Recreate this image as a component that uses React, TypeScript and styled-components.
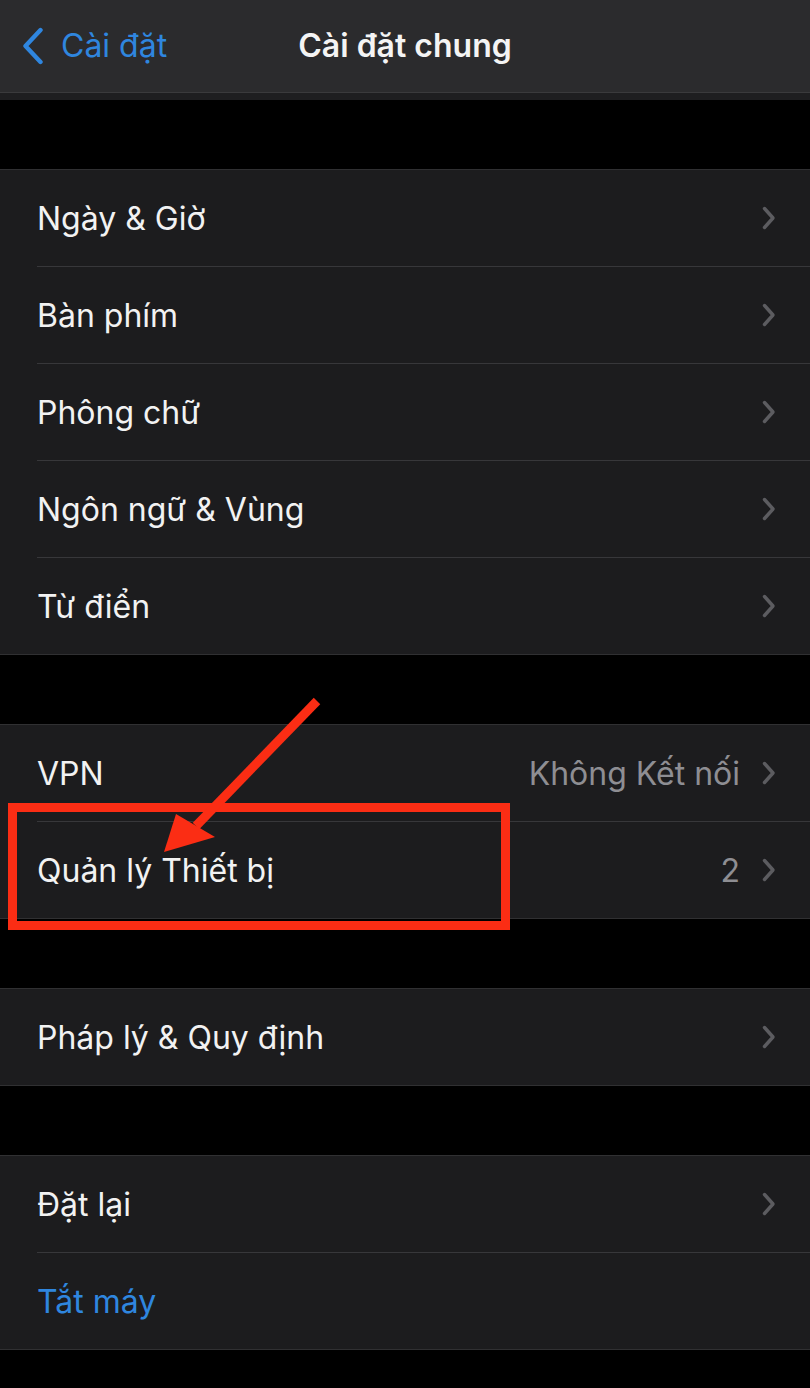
import React from "react";
import styled, { createGlobalStyle } from "styled-components";

const GlobalStyle = createGlobalStyle`
  html, body {
    margin: 0;
    padding: 0;
    background: #000;
  }
  body {
    font-family: Inter, "Noto Sans", "Liberation Sans", sans-serif;
    -webkit-font-smoothing: antialiased;
  }
`;

const Screen = styled.div`
  position: relative;
  width: 810px;
  height: 1388px;
  overflow: hidden;
  background: #000;
`;

const NavBar = styled.header`
  display: grid;
  grid-template-columns: 1fr auto 1fr;
  align-items: center;
  height: 92px;
  background: #2b2b2d;
  border-bottom: 1px solid #3a3a3c;
`;

const NavStrip = styled.div`
  height: 7px;
  background: #1e1e20;
`;

const BackButton = styled.div`
  display: flex;
  align-items: center;
  gap: 17px;
  padding-left: 22px;
  color: #2f86df;
  font-size: 32px;
  padding-bottom: 1px;
`;

const Title = styled.h1`
  margin: 0;
  color: #f4f4f4;
  font-size: 32px;
  font-weight: 600;
  padding-bottom: 1px;
`;

const Group = styled.section`
  margin-top: 69px;
  background: #1c1c1e;
  border-top: 1px solid #303032;
  border-bottom: 1px solid #303032;
`;

const Row = styled.div`
  padding-left: 37px;
`;

const RowBody = styled.div<{ $first?: boolean }>`
  display: flex;
  align-items: center;
  height: 96px;
  padding-right: 34px;
  border-top: ${(p) => (p.$first ? "none" : "1px solid #37373a")};
`;

const Label = styled.span<{ $accent?: boolean }>`
  flex: 1;
  font-size: 32px;
  color: ${(p) => (p.$accent ? "#2f86df" : "#f2f2f2")};
  padding-bottom: 0;
`;

const Value = styled.span`
  font-size: 32px;
  color: #8e8e93;
  margin-right: 22px;
`;

const Annotation = styled.svg`
  position: absolute;
  left: 0;
  top: 0;
  pointer-events: none;
`;

type Item = { label: string; value?: string; chevron?: boolean; accent?: boolean };

const groups: Item[][] = [
  [
    { label: "Ngày & Giờ", chevron: true },
    { label: "Bàn phím", chevron: true },
    { label: "Phông chữ", chevron: true },
    { label: "Ngôn ngữ & Vùng", chevron: true },
    { label: "Từ điển", chevron: true },
  ],
  [
    { label: "VPN", value: "Không Kết nối", chevron: true },
    { label: "Quản lý Thiết bị", value: "2", chevron: true },
  ],
  [{ label: "Pháp lý & Quy định", chevron: true }],
  [
    { label: "Đặt lại", chevron: true },
    { label: "Tắt máy", accent: true },
  ],
];

const Chevron = () => (
  <svg width="14" height="24" viewBox="0 0 14 24">
    <path
      d="M2.5 2.5 L11 12 L2.5 21.5"
      fill="none"
      stroke="#5c5c60"
      strokeWidth="3.4"
      strokeLinecap="round"
      strokeLinejoin="round"
    />
  </svg>
);

const BackChevron = () => (
  <svg width="22" height="38" viewBox="0 0 22 38">
    <path
      d="M18.5 3 L3.5 19 L18.5 35"
      fill="none"
      stroke="#2f86df"
      strokeWidth="4.4"
      strokeLinecap="round"
      strokeLinejoin="round"
    />
  </svg>
);

export default function App() {
  return (
    <Screen>
      <GlobalStyle />
      <NavBar>
        <BackButton>
          <BackChevron />
          <span>Cài đặt</span>
        </BackButton>
        <Title>Cài đặt chung</Title>
        <div />
      </NavBar>
      <NavStrip />

      {groups.map((items, gi) => (
        <Group key={gi}>
          {items.map((it, i) => (
            <Row key={it.label}>
              <RowBody $first={i === 0}>
                <Label $accent={it.accent}>{it.label}</Label>
                {it.value && <Value>{it.value}</Value>}
                {it.chevron && <Chevron />}
              </RowBody>
            </Row>
          ))}
        </Group>
      ))}

      <Annotation width="810" height="1388" viewBox="0 0 810 1388">
        <rect x="12.5" y="807.5" width="493" height="118" fill="none" stroke="#fb2d14" strokeWidth="9" />
        <line x1="317" y1="701" x2="196" y2="826" stroke="#fb2d14" strokeWidth="9" />
        <polygon points="164,852 176,814 215,837" fill="#fb2d14" />
      </Annotation>
    </Screen>
  );
}
